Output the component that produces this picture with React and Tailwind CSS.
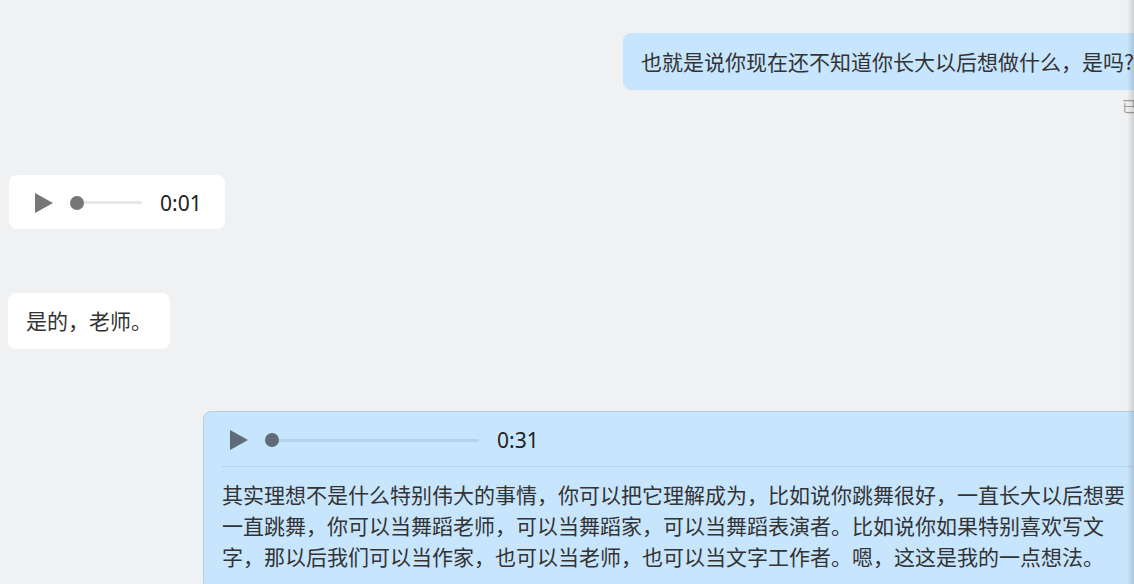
import React from 'react';

const cjk = { fontFamily: '"Noto Sans CJK SC", "Noto Sans", sans-serif' };

function PlayIcon({ color }) {
    return (
        <svg width="18" height="20" viewBox="0 0 18 20" className="shrink-0">
            <path d="M0 0 L18 10 L0 20 Z" fill={color} />
        </svg>
    );
}

function AudioRow({ iconColor, trackColor, trackWidth, time }) {
    return (
        <div className="flex items-center h-[30px]">
            <PlayIcon color={iconColor} />
            <div className="relative flex items-center h-[16px] ml-[17px]" style={{ width: trackWidth }}>
                <div className="h-[3px] w-full ml-[7px] rounded-full" style={{ backgroundColor: trackColor }} />
                <div className="absolute left-0 top-[1px] w-[14px] h-[14px] rounded-full" style={{ backgroundColor: iconColor }} />
            </div>
            <span className="ml-[18px] text-[21px] text-[#222] leading-[30px]" style={{ fontFamily: '"Noto Sans", sans-serif' }}>
                {time}
            </span>
        </div>
    );
}

export default function App() {
    return (
        <div className="relative w-[1134px] h-[584px] overflow-hidden bg-[#f0f1f3]" style={cjk}>
            <div className="ml-[8px] w-[1144px] flex flex-col">
                {/* teacher question */}
                <div className="self-end mt-[33px] bg-[#c7e5fd] rounded-[8px] px-[18px] py-[13px] text-[21px] leading-[31px] text-[#333] whitespace-nowrap">
                    也就是说你现在还不知道你长大以后想做什么，是吗?
                </div>
                <div className="self-end mt-[6px] text-[15px] leading-[20px] text-[#a0a0a0]">已读</div>

                {/* student voice */}
                <div className="self-start mt-[59px] ml-[1px] bg-white rounded-[8px] flex items-center h-[54px] pl-[26px] pr-[23px]">
                    <div className="pt-[1px]">
                        <AudioRow iconColor="#777777" trackColor="#e8e8e8" trackWidth={72} time="0:01" />
                    </div>
                </div>

                <div className="self-start mt-[64px] bg-white rounded-[8px] px-[18px] pt-[12px] pb-[13px] text-[21px] leading-[31px] text-[#333] whitespace-nowrap">
                    是的，老师。
                </div>

                {/* teacher voice with transcript */}
                <div className="self-end mt-[62px] w-[949px] bg-[#c7e5fd] border border-[#b0d2ee] rounded-[8px] px-[18px] pt-[13px] pb-[16px]">
                    <div className="pl-[8px]">
                        <AudioRow iconColor="#5f6b78" trackColor="#b4d3ec" trackWidth={214} time="0:31" />
                    </div>
                    <div className="mt-[11px] h-px bg-[#b2d3ee]" />
                    <p className="mt-[12px] text-[21px] leading-[31px] text-[#333]">
                        其实理想不是什么特别伟大的事情，你可以把它理解成为，比如说你跳舞很好，一直长大以后想要一直跳舞，你可以当舞蹈老师，可以当舞蹈家，可以当舞蹈表演者。比如说你如果特别喜欢写文字，那以后我们可以当作家，也可以当老师，也可以当文字工作者。嗯，这这是我的一点想法。
                    </p>
                </div>
            </div>

            {/* edge shadow of the side panel */}
            <div className="absolute right-0 top-0 h-full w-[7px] bg-gradient-to-r from-transparent to-[rgba(0,0,0,0.14)]" />
        </div>
    );
}
